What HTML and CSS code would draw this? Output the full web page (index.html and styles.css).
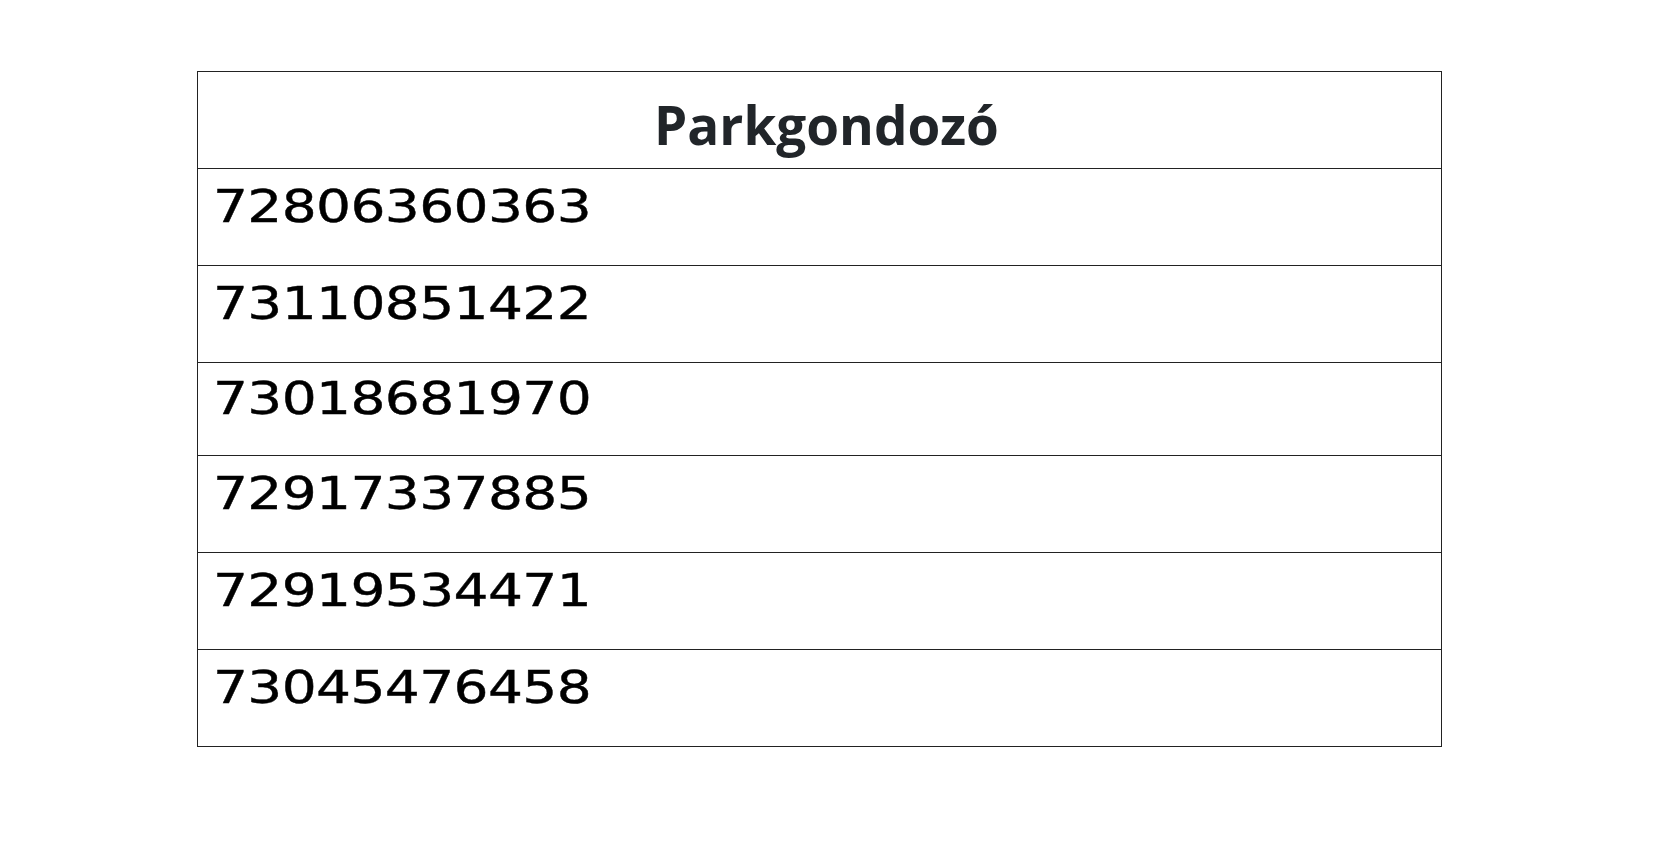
FILE: index.html
```html
<!DOCTYPE html>
<html lang="hu">
<head>
<meta charset="utf-8">
<title>Parkgondozó</title>
<link rel="stylesheet" href="styles.css">
</head>
<body>
<div class="page">
  <table class="list">
    <thead>
      <tr><th class="head">Parkgondozó</th></tr>
    </thead>
    <tbody>
      <tr><td class="cell"><span class="num">72806360363</span></td></tr>
      <tr><td class="cell"><span class="num">73110851422</span></td></tr>
      <tr><td class="cell cell-short"><span class="num">73018681970</span></td></tr>
      <tr><td class="cell"><span class="num">72917337885</span></td></tr>
      <tr><td class="cell"><span class="num">72919534471</span></td></tr>
      <tr><td class="cell"><span class="num">73045476458</span></td></tr>
    </tbody>
  </table>
</div>
</body>
</html>
```
FILE: styles.css
```css
html, body {
  margin: 0;
  padding: 0;
  background: #ffffff;
}

.page {
  padding: 71px 0 0 197px;
}

.list {
  width: 1245px;
  border-collapse: collapse;
  border: 1px solid #222;
}

.head {
  height: 97px;
  box-sizing: border-box;
  padding: 8px 0 0 14px;
  border: 1px solid #222;
  font-family: "Open Sans", "Noto Sans", sans-serif;
  font-weight: 700;
  font-size: 53px;
  color: #212529;
  text-align: center;
  vertical-align: middle;
  line-height: 1;
}

.cell {
  height: 97px;
  box-sizing: border-box;
  padding: 12px 15px 0 15px;
  border: 1px solid #222;
  vertical-align: top;
  font-family: "DejaVu Sans", sans-serif;
  font-size: 44px;
  line-height: 1.2;
  color: #000;
  -webkit-text-stroke: 0.4px #000;
}

.cell-short {
  height: 93px;
  padding-top: 10px;
}

.num {
  display: inline-block;
  transform: scaleX(1.25);
  transform-origin: left center;
  letter-spacing: -0.5px;
}
```
